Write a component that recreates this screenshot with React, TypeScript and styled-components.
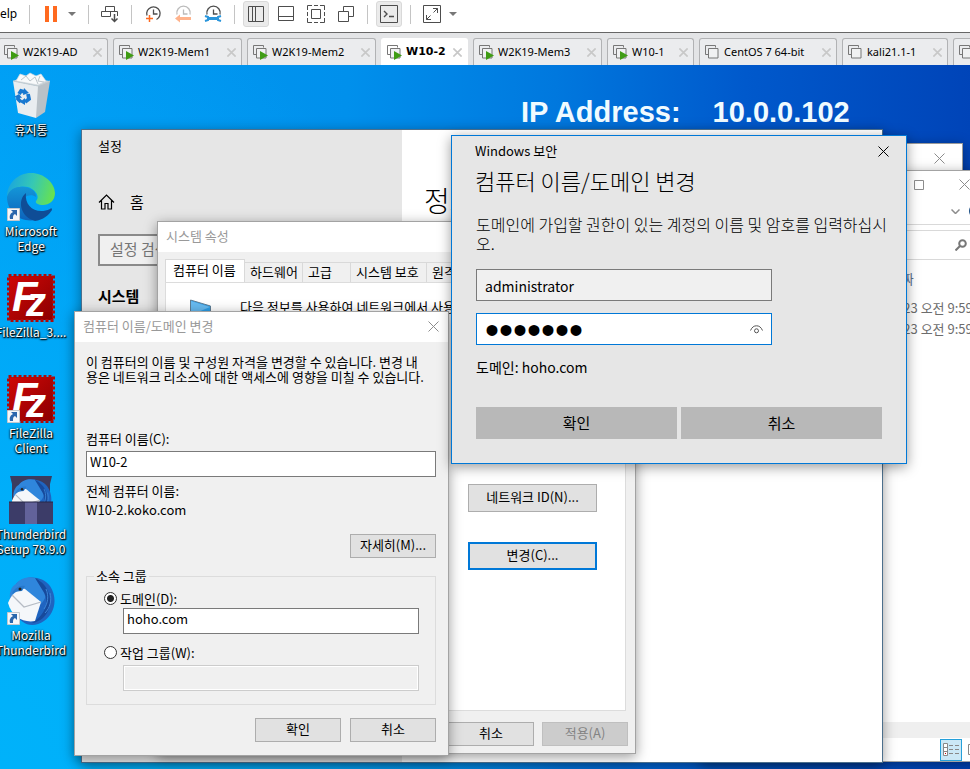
import React from "react";
import styled, { createGlobalStyle, css } from "styled-components";

const KR = '"Noto Sans CJK KR", "Noto Sans", sans-serif';
const UI = '"Noto Sans", "Noto Sans CJK KR", sans-serif';

const GlobalStyle = createGlobalStyle`
  *, *::before, *::after { box-sizing: border-box; }
  body { margin: 0; overflow: hidden; font-family: ${KR}; font-size: 13px; line-height: 16px; color: #000; }
  button, input { font: inherit; color: inherit; margin: 0; }
  ul, p, h1, h2, h3 { margin: 0; padding: 0; }
`;

const Screen = styled.div`
  display: flex;
  flex-direction: column;
  height: 100vh;
  overflow: hidden;
`;

/* ---------- host toolbar ---------- */
const Toolbar = styled.header`
  display: flex;
  flex: none;
  align-items: center;
  height: 33px;
  padding-bottom: 4px;
  background: #fff;
  border-bottom: 1px solid #666;
`;
const MenuText = styled.button`
  width: 29px;
  padding: 0;
  border: 0;
  background: none;
  text-align: left;
  font: 12px/16px ${UI};
`;
const ToolGroup = styled.div`
  display: flex;
  gap: 4px;
  padding: 0 8px;
`;
const Split = styled.div`
  display: flex;
`;
const Separator = styled.span`
  width: 1px;
  height: 19px;
  background: #c4c4c4;
`;
const ToolButton = styled.button<{ $on?: boolean; $narrow?: boolean }>`
  display: flex;
  align-items: center;
  justify-content: center;
  width: ${(p) => (p.$narrow ? 16 : 26)}px;
  height: 26px;
  padding: 0;
  border: 1px solid ${(p) => (p.$on ? "#d9d9d9" : "transparent")};
  border-radius: 3px;
  background: ${(p) => (p.$on ? "#ebebeb" : "none")};
`;

/* ---------- machine tabs ---------- */
const TabStrip = styled.nav`
  display: flex;
  flex: none;
  gap: 5px;
  height: 32px;
  padding-top: 5px;
  margin-left: -2px;
  background: #e3e4e6;
  overflow: hidden;
`;
const MachineTab = styled.div<{ $w: number; $active?: boolean }>`
  display: flex;
  flex: 0 0 ${(p) => p.$w}px;
  align-items: center;
  padding: 0 5px;
  border: 1px solid ${(p) => (p.$active ? "#fff" : "#b1b2b4")};
  border-bottom: 0;
  border-radius: 3px 3px 0 0;
  background: ${(p) => (p.$active ? "#fff" : "#ebecee")};
`;
const TabName = styled.button<{ $active?: boolean }>`
  display: flex;
  flex: 1;
  align-items: center;
  gap: 4px;
  padding: 0;
  border: 0;
  background: none;
  white-space: nowrap;
  font: ${(p) => (p.$active ? 'bold 11px/16px "DejaVu Sans", sans-serif' : `11px/16px ${UI}`)};
`;
const PlainButton = styled.button`
  display: flex;
  flex: none;
  padding: 0;
  border: 0;
  background: none;
`;

/* ---------- guest desktop ---------- */
const Desktop = styled.main`
  position: relative;
  flex: 1;
  overflow: hidden;
  background:
    radial-gradient(ellipse 560px 800px at 0 100%, #00b2fa 0%, rgba(0, 176, 250, 0.9) 35%, rgba(0, 160, 245, 0) 100%),
    linear-gradient(92deg, #009cf4 0%, #0090ec 35%, #0078de 56%, #0059cc 75%, #0042b6 100%);
`;
const Shortcuts = styled.ul`
  display: flex;
  flex-direction: column;
  width: 62px;
  padding-top: 7px;
  list-style: none;
`;
const Shortcut = styled.button`
  display: flex;
  flex-direction: column;
  align-items: center;
  width: 100%;
  height: 101px;
  padding: 0;
  border: 0;
  background: none;
  color: #fff;
  font: 12px/15px ${KR};
  white-space: pre;
  text-shadow: 1px 1px 1px #000, 0 1px 2px #000, 0 0 2px rgba(0, 0, 0, 0.7);
  svg { flex: none; margin-bottom: 2px; }
`;
const Address = styled.p`
  position: absolute;
  left: 521px;
  top: 30px;
  display: flex;
  gap: 32px;
  color: #f0fbff;
  font: bold 29px/34px "Liberation Sans", sans-serif;
  white-space: nowrap;
`;

const Window = styled.section<{ $x: number; $y: number; $w: number; $h?: number; $border?: string; $bg?: string }>`
  position: absolute;
  left: ${(p) => p.$x}px;
  top: ${(p) => p.$y}px;
  width: ${(p) => p.$w}px;
  ${(p) => p.$h && css`height: ${p.$h}px;`}
  border: 1px solid ${(p) => p.$border || "#a3a3a3"};
  background: ${(p) => p.$bg || "#f0f0f0"};
  box-shadow: 0 3px 12px rgba(0, 0, 0, 0.4);
  overflow: hidden;
`;
const TitleBar = styled.header`
  display: flex;
  align-items: center;
  justify-content: space-between;
  height: 30px;
  padding: 0 9px 2px 8px;
  background: #fff;
  color: #999;
`;
const Title = styled.h2`
  font: 13px/16px ${KR};
  white-space: nowrap;
`;

/* explorer */
const Caption = styled.div`
  display: flex;
  justify-content: flex-end;
  gap: 35px;
  height: 27px;
  align-items: center;
  padding-right: 29px;
`;
const AddressRow = styled.div`
  display: flex;
  align-items: center;
  justify-content: flex-end;
  gap: 9px;
  height: 27px;
  padding-right: 16px;
  border-bottom: 1px solid #d9d9d9;
`;
const SearchRow = styled(AddressRow)`
  height: 30px;
  margin-top: 5px;
  padding-right: 32px;
  border-top: 1px solid #d9d9d9;
`;
const Files = styled.table`
  margin: 8px 0 0 150px;
  border-spacing: 0;
  color: #6d6d6d;
  white-space: nowrap;
  th { height: 21px; padding: 0; font-weight: 400; text-align: left; color: #5c6f8e; }
  td { height: 21px; padding: 0; }
  tbody tr:first-child td { height: 29px; padding-top: 8px; }
`;
const ExplorerFrame = styled.div`
  display: flex;
  flex-direction: column;
  height: 100%;
`;
const Scroll = styled.div`
  height: 16px;
  margin-top: auto;
  background: #efefef;
`;
const Status = styled.div`
  display: flex;
  gap: 5px;
  align-items: center;
  justify-content: flex-end;
  height: 23px;
  padding-right: 16px;
`;
const ViewButton = styled(PlainButton)<{ $on?: boolean }>`
  align-items: center;
  justify-content: center;
  width: ${(p) => (p.$on ? 22 : 16)}px;
  height: 22px;
  border: 1px solid ${(p) => (p.$on ? "#26a0da" : "transparent")};
  background: ${(p) => (p.$on ? "#cbe8f6" : "none")};
`;

/* settings */
const SettingsGrid = styled.div`
  display: grid;
  grid-template-columns: 320px 1fr;
  height: 100%;
`;
const Side = styled.aside`
  display: flex;
  flex-direction: column;
  padding: 8px 16px;
  background: #e6e6e6;
`;
const HomeLink = styled.a`
  display: flex;
  align-items: center;
  gap: 15px;
  height: 24px;
  margin-top: 36px;
  color: #000;
  font-size: 15px;
  text-decoration: none;
`;
const SettingsSearch = styled.input`
  height: 32px;
  margin-top: 20px;
  padding: 0 10px 4px;
  border: 2px solid #8a8a8a;
  background: #f0f0f0;
  font-size: 15px;
  &::placeholder { color: #767676; opacity: 1; }
`;
const SideHeading = styled.h3`
  margin-top: 20px;
  font: 700 15px/20px ${KR};
`;
const PageHeading = styled.h1`
  padding: 52px 22px;
  font: 300 28px/36px ${KR};
`;

/* system properties */
const SheetBody = styled.div`
  display: flex;
  flex-direction: column;
  padding: 7px;
`;
const SheetTabs = styled.div`
  display: flex;
  align-items: flex-end;
  height: 23px;
`;
const SheetTab = styled.button<{ $w: number; $on?: boolean }>`
  flex: 0 0 ${(p) => p.$w}px;
  height: ${(p) => (p.$on ? 23 : 20)}px;
  padding: 0 0 2px ${(p) => (p.$on ? 7 : 5)}px;
  border: 1px solid #d9d9d9;
  border-left-width: ${(p) => (p.$on ? 1 : 0)}px;
  border-bottom: 0;
  background: ${(p) => (p.$on ? "#fff" : "#f0f0f0")};
  text-align: left;
  white-space: nowrap;
  overflow: hidden;
`;
const SheetPage = styled.div`
  display: flex;
  flex-direction: column;
  align-items: flex-end;
  width: 461px;
  height: 429px;
  padding: 16px 28px 0 24px;
  border: 1px solid #dcdcdc;
  background: #fff;
`;
const Intro = styled.div`
  display: flex;
  gap: 28px;
  width: 100%;
  height: 155px;
  white-space: nowrap;
`;
const ButtonStack = styled.div`
  display: flex;
  flex-direction: column;
  gap: 30px;
  margin-top: 30px;
`;
const Actions = styled.div<{ $gap: number; $top: number }>`
  display: flex;
  justify-content: flex-end;
  gap: ${(p) => p.$gap}px;
  margin-top: ${(p) => p.$top}px;
`;
const ClassicButton = styled.button<{ $w?: number; $focus?: boolean }>`
  width: ${(p) => p.$w || 86}px;
  height: ${(p) => (p.$w ? 28 : 24)}px;
  padding: 0 0 2px;
  border: ${(p) => (p.$focus ? "2px solid #0078d7" : "1px solid #adadad")};
  background: #e1e1e1;
  &:disabled { background: #ccc; border-color: #bfbfbf; color: #838383; }
`;

/* computer name dialog */
const DialogBody = styled.form`
  display: flex;
  flex-direction: column;
  padding: 12px 12px 13px 11px;
`;
const Notice = styled.p`
  height: 77px;
  line-height: 15px;
  white-space: nowrap;
`;
const Field = styled.div`
  display: flex;
  flex-direction: column;
  gap: 4px;
`;
const ClassicInput = styled.input`
  width: 100%;
  height: 26px;
  padding: 0 4px 6px 3px;
  border: 1px solid #7a7a7a;
  background: #fff;
  &:disabled { border-color: #ccc; background: #f0f0f0; box-shadow: inset 0 0 0 1px #fff; }
`;
const FullName = styled.p`
  margin: 4px 0 15px;
  line-height: 19px;
`;
const Members = styled.fieldset`
  display: flex;
  flex-direction: column;
  min-width: 0;
  margin: 10px 0 0;
  padding: 6px 16px 13px 17px;
  border: 1px solid #dcdcdc;
  legend { margin-left: -10px; padding: 0 2px; }
`;
const RadioLabel = styled.label`
  display: flex;
  align-items: center;
  gap: 3px;
  height: 17px;
  input {
    appearance: none;
    width: 13px;
    height: 13px;
    border: 1px solid #333;
    border-radius: 50%;
    background: #fff;
  }
  input:checked { background: radial-gradient(circle, #222 0 3px, #fff 4px); }
`;
const Indent = styled.div<{ $last?: boolean }>`
  padding-left: 19px;
  margin-bottom: ${(p) => (p.$last ? 0 : 10)}px;
  margin-top: ${(p) => (p.$last ? 4 : 1)}px;
`;

/* security prompt */
const Prompt = styled.form`
  display: flex;
  flex-direction: column;
  padding: 6px 24px 24px 23px;
  font-size: 15px;
`;
const PromptTop = styled.div`
  display: flex;
  align-items: center;
  justify-content: space-between;
  height: 18px;
  margin-right: -7px;
`;
const PromptHeading = styled.h1`
  margin-top: 4px;
  font: 300 22px/32px ${KR};
`;
const PromptText = styled.p`
  margin: 19px 0 16px;
  padding-left: 1px;
  font-size: 16px;
  font-weight: 300;
  line-height: 19px;
  white-space: nowrap;
`;
const Credentials = styled.div`
  display: flex;
  flex-direction: column;
  gap: 12px;
  padding-left: 1px;
  font-size: 14px;
`;
const PromptInput = styled.input`
  width: 296px;
  height: 32px;
  padding: 1px 8px 0;
  border: 1px solid #7a7a7a;
  background: #f0f0f0;
  outline: none;
`;
const Secret = styled.label`
  display: flex;
  align-items: center;
  width: 296px;
  height: 32px;
  padding: 0 8px;
  border: 1px solid #0078d7;
  background: #fff;
  input {
    flex: 1;
    min-width: 0;
    height: 30px;
    padding: 3px 0 0;
    border: 0;
    outline: none;
    background: none;
    font: 40px/26px "Liberation Sans", sans-serif;
  }
`;
const DomainLine = styled.p`
  margin-bottom: 30px;
  line-height: 20px;
`;
const PromptActions = styled.div`
  display: grid;
  grid-template-columns: 1fr 1fr;
  gap: 4px;
  padding-left: 1px;
`;
const FlatButton = styled.button`
  height: 32px;
  padding: 0;
  border: 0;
  background: #b8b8b8;
`;

/* ---------- icons ---------- */
const Cross = ({ size = 11, color = "#8c8c8c", width = 1 }: { size?: number; color?: string; width?: number }) => (
  <svg width={size} height={size} viewBox="0 0 11 11" stroke={color} strokeWidth={width}>
    <path d="M.5 .5l10 10M10.5 .5l-10 10" />
  </svg>
);
const Caret = () => (
  <svg width="8" height="4" viewBox="0 0 8 4"><path d="M0 0h8L4 4z" fill="#777" /></svg>
);
const MachineIcon = ({ running }: { running?: boolean }) => (
  <svg width="15" height="15" viewBox="0 0 15 15" fill="none" stroke="#777">
    <path d="M3.500 9.500H.500V.500h10v2" />
    <path d="M3.500 3.500h9.500v9.500H3.500z" fill="#f0f1f2" />
    {running && <path d="M7 6l8 4.500-8 4.500z" fill="#3f9c14" stroke="none" />}
  </svg>
);
const Frame = ({ children }: { children: React.ReactNode }) => (
  <svg width="18" height="18" viewBox="0 0 18 18" fill="none" stroke="#4d4d4d">{children}</svg>
);
const Clock = ({ faded }: { faded?: boolean }) => (
  <g stroke={faded ? "#bbb" : "#4d4d4d"} strokeWidth="1.300">
    <path d="M3 10.500A6.700 6.700 0 1 1 12.500 14.500M9.500 4.500v4.500h4" />
  </g>
);
const HalfClock = ({ faded }: { faded?: boolean }) => (
  <path d="M3 9.500A6.700 6.700 0 1 1 16 9.500M9.500 4.500v4.500h4" stroke={faded ? "#bbb" : "#4d4d4d"} strokeWidth="1.300" />
);

const BinIcon = () => (
  <svg width="48" height="48" viewBox="0 0 48 48">
    <path d="M29 14l14-5-5 31-9 6z" fill="#b9c1c7" />
    <path d="M6 9l25 5-2 32-18-5z" fill="#e9edf0" />
    <path d="M6 9l10-4 27 4-12 5z" fill="#cfd6da" />
    <path d="M9 9l4-7 6 2 4-3 6 3 5-2 5 7-8 4z" fill="#f8fafb" stroke="#d2d9de" strokeWidth=".7" />
    <path d="M14 8l5-4 4 5 5-4 3 7M33 4l-2 5 6 1" fill="none" stroke="#bcc5ca" />
    <path d="M6 9l25 5 12-5" fill="none" stroke="#c3ccd1" />
    <g fill="none" stroke="#1878d0" strokeWidth="3.800">
      <path d="M12 22l2-3 4 1M21 22l1 5-4 3M14 30l-3-3v-2" />
    </g>
    <path d="M17 16l5 5-6 2zM18 26v7l-5-3zM7 25l5-3 3 4z" fill="#1878d0" />
  </svg>
);
const ShortcutArrow = () => (
  <g>
    <path d="M.5 35.500h12v12H.5z" fill="#f5f7fa" stroke="#c4c8cd" />
    <path d="M4 37h6v6l-2-2c-2 1-2 2-2 5H3c-1-4 1-6 3-7z" fill="#2a67ad" />
  </g>
);
const EdgeIcon = () => (
  <svg width="48" height="48" viewBox="0 0 48 48">
    <defs>
      <linearGradient id="edgeTop" x1="0" y1=".4" x2="1" y2=".6">
        <stop offset="0" stopColor="#1aa5de" /><stop offset=".5" stopColor="#36c8b4" /><stop offset="1" stopColor="#69e24d" />
      </linearGradient>
      <linearGradient id="edgeSide" x1="0" y1="0" x2="0" y2="1">
        <stop offset="0" stopColor="#1496d8" /><stop offset="1" stopColor="#0d62ba" />
      </linearGradient>
    </defs>
    <path d="M0 24C0 10 11 0 24 0s24 10 24 20c0 8-6 12-12 12-5 0-8-2-7-4 3-3 2-8-4-12C17 11 4 14 0 24z" fill="url(#edgeTop)" />
    <path d="M0 24C3 13 16 12 24 16c4 2 5 5 5 8-5-4-14-1-14 7 0 7 5 14 14 16C13 50 0 39 0 24z" fill="url(#edgeSide)" />
    <path d="M19 20c-9 7-6 24 9 28 8-1 14-6 17-11 0-2-1-2-2-1-13 6-26-2-24-16z" fill="#0f4d96" />
    <ShortcutArrow />
  </svg>
);
const ZillaIcon = ({ linked }: { linked?: boolean }) => (
  <svg width="48" height="48" viewBox="0 0 48 48" aria-label="FileZilla">
    <defs>
      <linearGradient id="zilla" x1="0" y1="0" x2="1" y2="1">
        <stop offset="0" stopColor="#cf0707" /><stop offset="1" stopColor="#8b0000" />
      </linearGradient>
    </defs>
    <path d="M2 2h44v44H2z" fill="url(#zilla)" />
    <path d="M1.500 1.500h45v45h-45z" fill="none" stroke="#b00808" strokeWidth="3" strokeDasharray="3 2" />
    <g fill="#fff" fontFamily="Liberation Sans" fontWeight="bold" fontStyle="italic" style={{ textShadow: "none" }}>
      <text x="5" y="37" fontSize="42">F</text>
      <text x="19" y="42" fontSize="40">z</text>
    </g>
    {linked && <ShortcutArrow />}
  </svg>
);
const Bird = () => (
  <g>
    <path d="M9 7C17-2 35-2 43 9c8 12 5 28-6 35-7 5-16 5-21 1l-8-6z" fill="#1f64c0" />
    <path d="M9 7C13 1 22-1 28 1c9 4 14 12 10 20-4 9-12 11-18 8L3 22C2 15 5 9 9 7z" fill="#2f86dc" />
    <path d="M28 1c10 4 18 17 14 30-2 8-9 14-17 15 14-9 18-21 11-32z" fill="#174a9c" />
    <path d="M39 12c3 7 2 14-2 20M43 16c2 7 0 15-5 20" stroke="#3b86d8" fill="none" />
    <path d="M1 26c4-10 11-15 17-14l16 13-6 19c-12 2-23-4-27-18z" fill="#f5f7fa" />
    <path d="M5 18l12 12 17-5" fill="none" stroke="#b5bbc4" strokeWidth="1.300" />
    <path d="M5 17c2-6 8-9 13-8l-3 5c-4 0-7 1-10 3z" fill="#2878cc" />
    <circle cx="13" cy="12" r="1.500" fill="#222" />
  </g>
);
const BirdIcon = () => (
  <svg width="48" height="48" viewBox="0 0 48 48"><Bird /><ShortcutArrow /></svg>
);
const BoxIcon = () => (
  <svg width="48" height="48" viewBox="0 0 48 48">
    <path d="M3 0h42l-2 8v22H5V8z" fill="#3b3b5e" />
    <g transform="translate(4 3) scale(.85)"><Bird /></g>
    <path d="M2 26h44v22H2z" fill="#3c3c68" />
    <path d="M18 26h12v22H18z" fill="#62629a" />
    <path d="M2 26h44" stroke="#262648" />
  </svg>
);

const machines = [
  { name: "W2K19-AD", w: 110, running: true },
  { name: "W2K19-Mem1", w: 129, running: true },
  { name: "W2K19-Mem2", w: 129, running: true },
  { name: "W10-2", w: 87, running: true, active: true },
  { name: "W2K19-Mem3", w: 129, running: true },
  { name: "W10-1", w: 87, running: true },
  { name: "CentOS 7 64-bit", w: 138 },
  { name: "kali21.1-1", w: 106 },
  { name: "", w: 106 },
];

const shortcuts = [
  { label: "휴지통", icon: <BinIcon /> },
  { label: "Microsoft\nEdge", icon: <EdgeIcon /> },
  { label: "FileZilla_3....", icon: <ZillaIcon /> },
  { label: "FileZilla\nClient", icon: <ZillaIcon linked /> },
  { label: "Thunderbird\nSetup 78.9.0", icon: <BoxIcon /> },
  { label: "Mozilla\nThunderbird", icon: <BirdIcon /> },
];

function HostToolbar() {
  return (
    <Toolbar>
      <MenuText>elp</MenuText>
      <Separator />
      <ToolGroup>
        <Split>
          <ToolButton aria-label="Suspend">
            <svg width="12" height="16" viewBox="0 0 12 16"><path d="M0 0h4v16H0zM8 0h4v16H8z" fill="#ff6a1f" /></svg>
          </ToolButton>
          <ToolButton $narrow aria-label="Power options"><Caret /></ToolButton>
        </Split>
      </ToolGroup>
      <Separator />
      <ToolGroup>
        <ToolButton aria-label="Send keys">
          <Frame><path d="M4.500 1.500h9v5h-9zM9.500 11.500h-9v-5h16v4.500M9.500 6.500v5" /><path d="M13.500 9v8M10.500 13.500l3 3 3-3" strokeWidth="1.500" /></Frame>
        </ToolButton>
      </ToolGroup>
      <Separator />
      <ToolGroup>
        <ToolButton aria-label="Take snapshot">
          <Frame><Clock /><path d="M5.500 10v7M2 13.500h7" stroke="#ff6a1f" strokeWidth="1.500" /></Frame>
        </ToolButton>
        <ToolButton aria-label="Revert snapshot">
          <Frame><HalfClock faded /><path d="M1 13.500l5-4v2.500h11v3H6v2.500z" fill="#ffb38c" stroke="none" /></Frame>
        </ToolButton>
        <ToolButton aria-label="Manage snapshots">
          <Frame><HalfClock /><path d="M4 13.500h10" stroke="#2995db" strokeWidth="3" /><path d="M1 11l3 1v3l-3 1M17 11l-3 1v3l3 1" stroke="#2995db" strokeWidth="2" /></Frame>
        </ToolButton>
      </ToolGroup>
      <Separator />
      <ToolGroup>
        <ToolButton $on aria-label="Library"><Frame><path d="M1.500 1.500h15v15h-15zM5.500 2v14M8.500 2v14" /></Frame></ToolButton>
        <ToolButton aria-label="Thumbnails"><Frame><path d="M1.500 1.500h15v14h-15zM2 11.500h14" /></Frame></ToolButton>
        <ToolButton aria-label="Full screen"><Frame><path d="M4.500 4.500h9v9h-9zM.5 5V.5H5M7 .5h4M13 .5h4.500V5M17.500 7v4M17.500 13v4.500H13M11 17.500H7M5 17.500H.5V13M.5 11V7" /></Frame></ToolButton>
        <ToolButton aria-label="Unity"><Frame><path d="M1.500 6.500h10v10h-10zM6.500 6V1.500h10v10H12" /></Frame></ToolButton>
      </ToolGroup>
      <Separator />
      <ToolGroup>
        <ToolButton $on aria-label="Console"><Frame><path d="M.5 .5h17v17H.5z" /><path d="M4 6l3 3-3 3M9 11.500h5" strokeWidth="1.400" /></Frame></ToolButton>
      </ToolGroup>
      <Separator />
      <ToolGroup>
        <Split>
          <ToolButton aria-label="Stretch"><Frame><path d="M.5 .5h17v17H.5z" /><path d="M3.500 14.500l4-4M10.500 7.500l4-4M10 3.500h4.500V8M3.500 10v4.500H8" /></Frame></ToolButton>
          <ToolButton $narrow aria-label="Stretch options"><Caret /></ToolButton>
        </Split>
      </ToolGroup>
    </Toolbar>
  );
}

function Explorer() {
  return (
    <>
      <Window $x={662} $y={78} $w={301} $h={100} $border="#9a9a9a" $bg="#fff">
        <TitleBar as="div">
          <span />
          <PlainButton aria-label="닫기">
            <svg width="19" height="11" viewBox="0 0 19 11" stroke="#8c8c8c"><path d="M.5 .5l10 10M10.500 .5l-10 10" /></svg>
          </PlainButton>
        </TitleBar>
      </Window>
      <Window $x={700} $y={105} $w={300} $h={592} $bg="#fff">
        <ExplorerFrame>
          <Caption>
            <PlainButton aria-label="최대화"><svg width="10" height="10" viewBox="0 0 10 10"><path d="M.5 .5h9v9h-9z" fill="none" stroke="#8c8c8c" /></svg></PlainButton>
            <PlainButton aria-label="닫기"><Cross /></PlainButton>
          </Caption>
          <AddressRow>
            <svg width="9" height="5" viewBox="0 0 9 5"><path d="M.5 .5l4 4 4-4" fill="none" stroke="#8c8c8c" strokeWidth="1.500" /></svg>
            <svg width="14" height="14" viewBox="0 0 14 14"><circle cx="7" cy="7" r="7" fill="#1b4f86" /></svg>
          </AddressRow>
          <SearchRow>
            <svg width="12" height="12" viewBox="0 0 12 12" fill="none" stroke="#777" strokeWidth="2"><circle cx="7.500" cy="4.500" r="3.300" /><path d="M5 7l-4.500 4.500" /></svg>
          </SearchRow>
          <Files>
            <thead><tr><th>수정한 날짜</th></tr></thead>
            <tbody>
              <tr><td>2021-04-23 오전 9:59</td></tr>
              <tr><td>2021-04-23 오전 9:59</td></tr>
            </tbody>
          </Files>
          <Scroll />
          <Status>
            <ViewButton $on aria-label="자세히">
              <svg width="16" height="14" viewBox="0 0 16 14" fill="none" stroke="#888">
                <path d="M.5 .5h4v12h-4zM.5 4.500h4M.5 8.500h4" fill="#fff" />
                <path d="M6 2.500h4M12 2.500h4M6 6.500h4M12 6.500h4M6 10.500h4M12 10.500h4" />
                <path d="M2 10.500h1" stroke="#c00" />
              </svg>
            </ViewButton>
            <ViewButton aria-label="큰 아이콘">
              <svg width="14" height="11" viewBox="0 0 14 11"><path d="M.5 .5h13v10H.5z" fill="#fff" stroke="#888" /><path d="M2 2h10v3H2z" fill="#4da0e8" /><path d="M2 5h10v4H2z" fill="#2f6f50" /></svg>
            </ViewButton>
          </Status>
        </ExplorerFrame>
      </Window>
    </>
  );
}

function Settings() {
  return (
    <Window $x={81} $y={64} $w={802} $h={634} $border="#4c6f8c" $bg="#fff">
      <SettingsGrid>
        <Side>
          <Title>설정</Title>
          <HomeLink href="#home">
            <svg width="17" height="16" viewBox="0 0 17 16" fill="none" stroke="#000" strokeWidth="1.200"><path d="M1 8.500L8.500 1 16 8.500M3.500 6.500V15h3.500V9.500h3V15h3.500V6.500" /></svg>
            홈
          </HomeLink>
          <SettingsSearch aria-label="설정 검색" placeholder="설정 검색" />
          <SideHeading>시스템</SideHeading>
        </Side>
        <PageHeading>정보</PageHeading>
      </SettingsGrid>
    </Window>
  );
}

function SystemProperties() {
  return (
    <Window $x={157} $y={156} $w={479} $border="#a3a3a3">
      <TitleBar><Title>시스템 속성</Title></TitleBar>
      <SheetBody>
        <SheetTabs role="tablist">
          <SheetTab role="tab" $w={80} $on>컴퓨터 이름</SheetTab>
          <SheetTab role="tab" $w={58}>하드웨어</SheetTab>
          <SheetTab role="tab" $w={48}>고급</SheetTab>
          <SheetTab role="tab" $w={76}>시스템 보호</SheetTab>
          <SheetTab role="tab" $w={48}>원격</SheetTab>
        </SheetTabs>
        <SheetPage>
          <Intro>
            <svg width="22" height="22" viewBox="0 0 22 22"><path d="M.5 1l20 6v15H.5z" fill="#2d9fe8" stroke="#5e7d94" /><path d="M1 2l19 6L1 16z" fill="#67baf0" /></svg>
            <p>다음 정보를 사용하여 네트워크에서 사용자의 컴퓨터를 식별합니다.</p>
          </Intro>
          <ButtonStack>
            <ClassicButton $w={129}>네트워크 ID(N)...</ClassicButton>
            <ClassicButton $w={129} $focus>변경(C)...</ClassicButton>
          </ButtonStack>
        </SheetPage>
        <Actions $gap={8} $top={11}>
          <ClassicButton>취소</ClassicButton>
          <ClassicButton disabled>적용(A)</ClassicButton>
        </Actions>
      </SheetBody>
    </Window>
  );
}

function NameDialog() {
  return (
    <Window $x={74} $y={246} $w={375}>
      <TitleBar>
        <Title>컴퓨터 이름/도메인 변경</Title>
        <PlainButton aria-label="닫기"><Cross /></PlainButton>
      </TitleBar>
      <DialogBody>
        <Notice>
          이 컴퓨터의 이름 및 구성원 자격을 변경할 수 있습니다. 변경 내<br />
          용은 네트워크 리소스에 대한 액세스에 영향을 미칠 수 있습니다.
        </Notice>
        <Field>
          <label htmlFor="pc">컴퓨터 이름(C):</label>
          <ClassicInput id="pc" defaultValue="W10-2" />
        </Field>
        <FullName>전체 컴퓨터 이름:<br />W10-2.koko.com</FullName>
        <Actions $gap={9} $top={0}><ClassicButton type="button">자세히(M)...</ClassicButton></Actions>
        <Members>
          <legend>소속 그룹</legend>
          <RadioLabel><input type="radio" name="member" defaultChecked />도메인(D):</RadioLabel>
          <Indent><ClassicInput aria-label="도메인" defaultValue="hoho.com" /></Indent>
          <RadioLabel><input type="radio" name="member" />작업 그룹(W):</RadioLabel>
          <Indent $last><ClassicInput aria-label="작업 그룹" disabled /></Indent>
        </Members>
        <Actions $gap={9} $top={13}>
          <ClassicButton type="button">확인</ClassicButton>
          <ClassicButton type="button">취소</ClassicButton>
        </Actions>
      </DialogBody>
    </Window>
  );
}

function SecurityPrompt() {
  return (
    <Window $x={451} $y={70} $w={456} $border="#0078d7" $bg="#e6e6e6">
      <Prompt>
        <PromptTop>
          <Title>Windows 보안</Title>
          <PlainButton type="button" aria-label="닫기"><Cross color="#000" /></PlainButton>
        </PromptTop>
        <PromptHeading>컴퓨터 이름/도메인 변경</PromptHeading>
        <PromptText>도메인에 가입할 권한이 있는 계정의 이름 및 암호를 입력하십시<br />오.</PromptText>
        <Credentials>
          <PromptInput aria-label="사용자 이름" defaultValue="administrator" />
          <Secret>
            <input type="password" aria-label="암호" defaultValue="1234567" />
            <PlainButton type="button" aria-label="암호 표시">
              <svg width="13" height="9" viewBox="0 0 13 9" fill="none" stroke="#555"><path d="M.5 5.500C2 2 4 .8 6.500.8S11 2 12.500 5.500" /><circle cx="6.500" cy="5.800" r="2" /></svg>
            </PlainButton>
          </Secret>
          <DomainLine>도메인: hoho.com</DomainLine>
        </Credentials>
        <PromptActions>
          <FlatButton type="button">확인</FlatButton>
          <FlatButton type="button">취소</FlatButton>
        </PromptActions>
      </Prompt>
    </Window>
  );
}

export default function App() {
  return (
    <Screen>
      <GlobalStyle />
      <HostToolbar />
      <TabStrip>
        {machines.map((m) => (
          <MachineTab key={m.name} $w={m.w} $active={m.active}>
            <TabName $active={m.active}><MachineIcon running={m.running} />{m.name}</TabName>
            <PlainButton aria-label="Close tab"><Cross size={9} color="#c8c8c8" width={2} /></PlainButton>
          </MachineTab>
        ))}
      </TabStrip>
      <Desktop>
        <Shortcuts>
          {shortcuts.map((s) => (
            <li key={s.label}><Shortcut>{s.icon}{s.label}</Shortcut></li>
          ))}
        </Shortcuts>
        <Address><span>IP Address:</span><span>10.0.0.102</span></Address>
        <Explorer />
        <Settings />
        <SystemProperties />
        <NameDialog />
        <SecurityPrompt />
      </Desktop>
    </Screen>
  );
}
